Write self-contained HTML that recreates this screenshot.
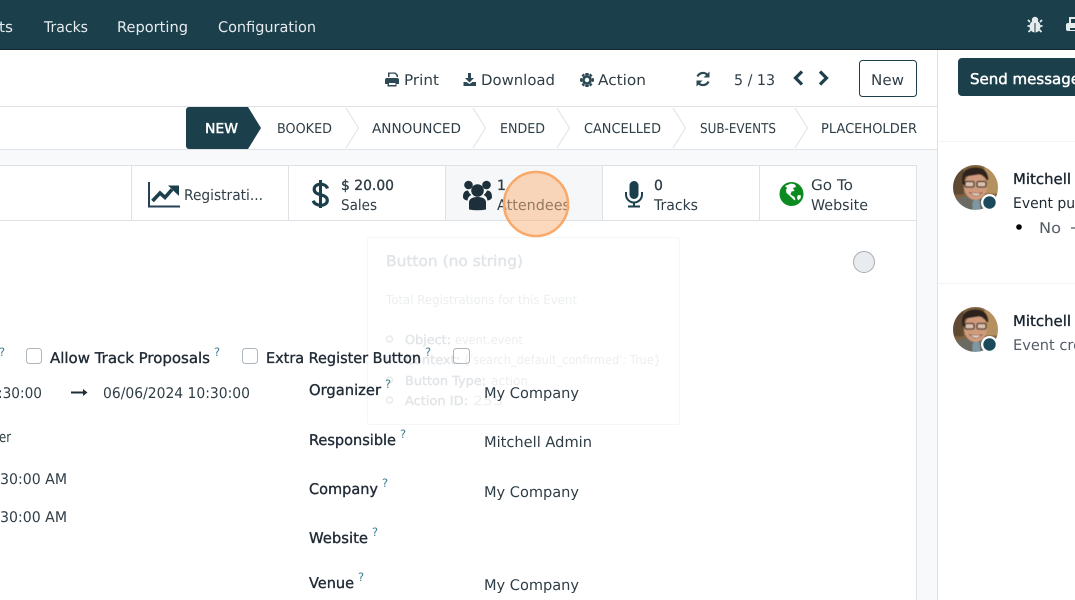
<!DOCTYPE html>
<html lang="en"><head><meta charset="utf-8"><title>Event</title>
<style>
html,body{margin:0;padding:0;background:#fff;width:1075px;height:600px;overflow:hidden}
svg{display:block}
text{font-family:"DejaVu Sans",sans-serif;font-size:14.700px;fill:#374151;text-rendering:geometricPrecision}
.n{fill:#e6ecee}
.t{fill:#2f3e46}
.s{font-size:13.600px;fill:#2f3e46}
.l{fill:#212b36;font-size:14.700px;stroke:#212b36;stroke-width:.35px}
.m{stroke:#2f3e46;stroke-width:.35px;font-size:14px}
.q{font-size:11.500px;fill:#3f7f93}
</style></head><body>
<svg width="1075" height="600" viewBox="0 0 1075 600" xmlns="http://www.w3.org/2000/svg">
<defs><filter id="soft" x="-10%" y="-10%" width="120%" height="120%"><feGaussianBlur stdDeviation=".45"/></filter></defs>
<!-- backgrounds -->
<rect width="1075" height="600" fill="#fff"/>
<rect y="150" width="938" height="450" fill="#f8f9fa"/>
<rect y="107" width="937" height="43" fill="#fff"/>
<rect y="166" width="916" height="434" fill="#fff"/>
<rect y="0" width="1075" height="49" fill="#1b3f4b"/>
<rect y="49" width="1075" height="1" fill="#12262e"/>
<!-- nav -->
<text class="n" x="-1" y="32" textLength="14" lengthAdjust="spacingAndGlyphs">ts</text>
<text class="n" x="44" y="32" textLength="44" lengthAdjust="spacingAndGlyphs">Tracks</text>
<text class="n" x="117" y="32" textLength="71" lengthAdjust="spacingAndGlyphs">Reporting</text>
<text class="n" x="218" y="32" textLength="98" lengthAdjust="spacingAndGlyphs">Configuration</text>
<!-- bug -->
<g fill="#e6ecee" stroke="#e6ecee">
<ellipse cx="1035" cy="26.500" rx="5.500" ry="6" stroke="none"/>
<circle cx="1035" cy="20" r="3.200" stroke="none"/>
<path d="M1030 22l-2-2M1040 22l2-2M1030 26h-2.500M1040 26h2.500M1030.500 30l-2 2M1039.500 30l2 2" fill="none" stroke-width="1.800"/>
</g>
<path d="M1035 23v9.500" stroke="#1b3f4b" stroke-width="1"/>
<!-- top print -->
<g fill="#e6ecee"><rect x="1069" y="17" width="10" height="7"/><rect x="1066" y="23" width="12" height="8" rx="2"/></g>
<rect x="1071" y="19" width="6" height="4" fill="#1b3f4b"/>
<rect x="1070" y="28" width="8" height="2" fill="#1b3f4b"/>
<!-- control panel -->
<rect x="0" y="106" width="937" height="1" fill="#dee2e6"/>
<rect x="0" y="149" width="937" height="1" fill="#dee2e6"/>
<rect x="937" y="50" width="1" height="550" fill="#dee2e6"/>
<!-- print icon -->
<g fill="#2c4a55">
<path d="M388 77v-4.500h7.500l2.500 2.500v2h-1.500v-1.500l-1.800-1.800h-5.200v3.300z"/>
<path d="M385 80a2 2 0 0 1 2-2h10a2 2 0 0 1 2 2v4h-2.500v2.500h-9v-2.500h-2.500zM389 83v2h6.500v-2z" fill-rule="evenodd"/>
</g>
<text class="t" x="404" y="85" textLength="35" lengthAdjust="spacingAndGlyphs">Print</text>
<!-- download icon -->
<path d="M468 73h3v5h3l-4.500 4.500-4.500-4.500h3zM463.500 82h3l3 2 3-2h3.500v4h-12.500z" fill="#2c4a55"/>
<text class="t" x="481" y="85" textLength="74" lengthAdjust="spacingAndGlyphs">Download</text>
<!-- gear -->
<g fill="#2c4a55"><circle cx="587" cy="80" r="5"/><path d="M585.500 73h3l.5 2h-4zM585.500 87h3l.5-2h-4zM580 78.500v3l2 .5v-4zM594 78.500v3l-2 .5v-4zM581.500 75.500l2-2 1.500 1.500-2 2zM592.500 75.500l-2-2-1.500 1.500 2 2zM581.500 84.500l2 2 1.500-1.500-2-2zM592.500 84.500l-2 2-1.500-1.500 2-2z"/></g>
<circle cx="587" cy="80" r="2.200" fill="#fff"/>
<text class="t" x="598" y="85" textLength="48" lengthAdjust="spacingAndGlyphs">Action</text>
<!-- refresh -->
<path d="M697.500 76.500a6 6 0 0 1 10-1.500M708.500 81.500a6 6 0 0 1-10 1.500" fill="none" stroke="#2c4a55" stroke-width="2.200"/>
<path d="M709.500 71.500v6h-6zM696.500 86.500v-6h6z" fill="#2c4a55"/>
<text x="734" y="85" textLength="41" lengthAdjust="spacingAndGlyphs" class="t">5 / 13</text>
<path d="M802 71.500l-6.500 6.500 6.500 6.500" fill="none" stroke="#1f3f4b" stroke-width="3.200"/>
<path d="M820 71.500l6.500 6.500-6.500 6.500" fill="none" stroke="#1f3f4b" stroke-width="3.200"/>
<rect x="859.500" y="60.500" width="57" height="36" rx="3" fill="#fff" stroke="#1b3f4b"/>
<text class="t" x="871" y="85" textLength="33" lengthAdjust="spacingAndGlyphs">New</text>
<!-- send message -->
<rect x="958" y="58" width="130" height="38" rx="4" fill="#1b3f4b"/>
<text x="970" y="84" textLength="110" lengthAdjust="spacingAndGlyphs" style="fill:#fff;stroke:#fff;stroke-width:.45px;font-size:14.700px">Send message</text>
<!-- statusbar -->
<path d="M189 107h59l13 21-13 21h-59a3 3 0 0 1-3-3v-36a3 3 0 0 1 3-3z" fill="#1b3f4b"/>
<text x="205" y="133" textLength="33" lengthAdjust="spacingAndGlyphs" style="fill:#fff;stroke:#fff;stroke-width:.45px;font-size:13.600px">NEW</text>
<g fill="none" stroke="#dee2e6" stroke-width="1">
<path d="M346 108l12.500 20-12.500 20M473 108l12.500 20-12.500 20M557 108l12.500 20-12.500 20M673 108l12.500 20-12.500 20M795 108l12.500 20-12.500 20"/>
</g>
<text class="s" x="277" y="133" textLength="55" lengthAdjust="spacingAndGlyphs">BOOKED</text>
<text class="s" x="372" y="133" textLength="89" lengthAdjust="spacingAndGlyphs">ANNOUNCED</text>
<text class="s" x="500" y="133" textLength="45" lengthAdjust="spacingAndGlyphs">ENDED</text>
<text class="s" x="584" y="133" textLength="77" lengthAdjust="spacingAndGlyphs">CANCELLED</text>
<text class="s" x="700" y="133" textLength="76" lengthAdjust="spacingAndGlyphs">SUB-EVENTS</text>
<text class="s" x="821" y="133" textLength="96" lengthAdjust="spacingAndGlyphs">PLACEHOLDER</text>
<!-- form sheet borders -->
<rect x="0" y="165" width="917" height="1" fill="#dee2e6"/>
<rect x="916" y="165" width="1" height="435" fill="#dee2e6"/>
<rect x="446" y="166" width="156" height="54" fill="#f6f7f8"/>
<rect x="0" y="220" width="916" height="1" fill="#dee2e6"/>
<g fill="#dee2e6"><rect x="131" y="166" width="1" height="54"/><rect x="288" y="166" width="1" height="54"/><rect x="445" y="166" width="1" height="54"/><rect x="602" y="166" width="1" height="54"/><rect x="759" y="166" width="1" height="54"/></g>
<!-- registrations icon -->
<path d="M149 182v24.500h31" fill="none" stroke="#24405a" stroke-width="2"/>
<path d="M152.500 201l7.500-8 5 4.500 7-8" fill="none" stroke="#1b3f4b" stroke-width="3.600"/>
<path d="M168 185.500h11v10.500z" fill="#1b3f4b"/>
<text x="184" y="200" textLength="79" lengthAdjust="spacingAndGlyphs" class="t">Registrati...</text>
<!-- dollar -->
<path d="M327.500 188.500c-1-3-4-4.300-7-4.300s-6.300 1.600-6.300 5c0 3.500 3 4.500 6.300 5.500s6.800 2 6.800 5.500-3.300 5-6.800 5-6.300-1.600-7.300-4.500" fill="none" stroke="#1b3f4b" stroke-width="3.200"/>
<path d="M320.500 180v28" stroke="#1b3f4b" stroke-width="3"/>
<text x="341" y="190" textLength="53" lengthAdjust="spacingAndGlyphs" class="t m">$ 20.00</text>
<text x="341" y="210" textLength="36" lengthAdjust="spacingAndGlyphs" class="t">Sales</text>
<!-- users -->
<g fill="#1d2f3a">
<circle cx="477.500" cy="190.500" r="6.300"/><circle cx="468.500" cy="185" r="4.300"/><circle cx="486.500" cy="185" r="4.300"/>
<path d="M469 209.500v-7c0-3.500 3-5.500 8.500-5.500s8.500 2 8.500 5.500v7q-8.500 1.500-17 0z"/>
<path d="M463 197c0-4 1.500-6.500 5-6.500 .8 2 2 3.500 3.500 4.500-2.500 1-3.700 3-3.900 5.500-2.500-.2-4.500-1.500-4.600-3.500zM492 197c0-4-1.500-6.500-5-6.500-.8 2-2 3.500-3.500 4.500 2.500 1 3.700 3 3.900 5.500 2.500-.2 4.500-1.500 4.600-3.500z"/>
</g>
<text x="497" y="190" class="t m">1</text>
<text x="497" y="210" textLength="73" lengthAdjust="spacingAndGlyphs" class="t">Attendees</text>
<!-- mic -->
<rect x="629.500" y="181" width="9" height="18" rx="4.500" fill="#1b3f4b"/>
<path d="M626 192v2.500a8 8 0 0 0 16 0V192M634 203v2.500M628 206.500h12" fill="none" stroke="#1b3f4b" stroke-width="2"/>
<text x="654" y="190" class="t m">0</text>
<text x="654" y="210" textLength="44" lengthAdjust="spacingAndGlyphs" class="t">Tracks</text>
<!-- globe -->
<circle cx="791.500" cy="194" r="12" fill="#0a8a1f"/>
<path d="M785 186l6-2.500 4 1 1 2.500-3 1 1.500 3-3 .5-1 3 4 2.500 1 3.500-2-1-4-4-3-2.500-.5-3 1-2zM798 195l3 .5-.5 3-2.500 2-1-3z" fill="#fff"/>
<text x="811" y="190" textLength="42" lengthAdjust="spacingAndGlyphs" class="t">Go To</text>
<text x="811" y="210" textLength="57" lengthAdjust="spacingAndGlyphs" class="t">Website</text>
<!-- radio -->
<circle cx="864" cy="262" r="10.500" fill="#e9ecef" stroke="#a8adb2" stroke-width="1"/>
<!-- faint tooltip -->
<rect x="367.500" y="237.500" width="312" height="187" rx="2" fill="#fff" stroke="#f5f6f7"/>
<g>
<text x="386" y="266" textLength="137" lengthAdjust="spacingAndGlyphs" style="fill:#e2e5e8;stroke:#e2e5e8;stroke-width:.5px">Button (no string)</text>
<text x="386" y="304" textLength="191" lengthAdjust="spacingAndGlyphs" style="fill:#eceef0;font-size:12.500px">Total Registrations for this Event</text>
<text x="405" y="344" textLength="46" lengthAdjust="spacingAndGlyphs" style="fill:#e2e5e8;stroke:#e2e5e8;stroke-width:.4px;font-size:12.500px">Object:</text>
<text x="455" y="344" textLength="68" lengthAdjust="spacingAndGlyphs" style="fill:#eceef0;font-size:12.500px">event.event</text>
<text x="405" y="364" textLength="55" lengthAdjust="spacingAndGlyphs" style="fill:#e2e5e8;stroke:#e2e5e8;stroke-width:.4px;font-size:12.500px">Context:</text>
<text x="463" y="364" textLength="198" lengthAdjust="spacingAndGlyphs" style="fill:#eceef0;font-size:12.500px">{'search_default_confirmed': True}</text>
<text x="405" y="385" textLength="81" lengthAdjust="spacingAndGlyphs" style="fill:#e2e5e8;stroke:#e2e5e8;stroke-width:.4px;font-size:12.500px">Button Type:</text>
<text x="491" y="385" textLength="37" lengthAdjust="spacingAndGlyphs" style="fill:#eceef0;font-size:12.500px">action</text>
<text x="405" y="405" textLength="63" lengthAdjust="spacingAndGlyphs" style="fill:#e2e5e8;stroke:#e2e5e8;stroke-width:.4px;font-size:12.500px">Action ID:</text>
<text x="473" y="405" textLength="30" lengthAdjust="spacingAndGlyphs" style="fill:#eceef0;font-size:12.500px">255</text>
</g>
<g fill="none" stroke="#e8eaec" stroke-width="1.500"><circle cx="389.500" cy="339" r="3"/><circle cx="389.500" cy="359" r="3"/><circle cx="389.500" cy="380" r="3"/><circle cx="389.500" cy="400" r="3"/></g>
<!-- checkbox row -->
<text class="q" x="-1" y="356">?</text>
<g fill="#fff" stroke="#adb5bd"><rect x="26.500" y="348.500" width="15" height="15" rx="3"/><rect x="242.500" y="348.500" width="15" height="15" rx="3"/><rect x="453.500" y="348.500" width="16" height="15" rx="3" fill="none"/></g>
<text class="l" x="50" y="363" textLength="160" lengthAdjust="spacingAndGlyphs">Allow Track Proposals</text>
<text class="q" x="214" y="356">?</text>
<text class="l" x="266" y="363" textLength="155" lengthAdjust="spacingAndGlyphs">Extra Register Button</text>
<text class="q" x="425" y="356">?</text>
<!-- dates -->
<text class="t" x="-2" y="398" textLength="44" lengthAdjust="spacingAndGlyphs">:30:00</text>
<path d="M71 392.500h13" stroke="#1f2d36" stroke-width="2"/><path d="M83 389l4.500 3.500-4.500 3.500z" fill="#1f2d36"/>
<text class="t" x="103" y="398" textLength="147" lengthAdjust="spacingAndGlyphs">06/06/2024 10:30:00</text>
<text class="t" x="-1" y="442" textLength="12" lengthAdjust="spacingAndGlyphs">er</text>
<text class="t" x="0" y="484" textLength="67" lengthAdjust="spacingAndGlyphs">30:00 AM</text>
<text class="t" x="0" y="522" textLength="67" lengthAdjust="spacingAndGlyphs">30:00 AM</text>
<!-- labels -->
<text class="l" x="309" y="395" textLength="72" lengthAdjust="spacingAndGlyphs">Organizer</text><text class="q" x="385" y="388">?</text>
<text class="l" x="309" y="445" textLength="87" lengthAdjust="spacingAndGlyphs">Responsible</text><text class="q" x="400" y="438">?</text>
<text class="l" x="309" y="494" textLength="69" lengthAdjust="spacingAndGlyphs">Company</text><text class="q" x="382" y="487">?</text>
<text class="l" x="309" y="543" textLength="59" lengthAdjust="spacingAndGlyphs">Website</text><text class="q" x="372" y="536">?</text>
<text class="l" x="309" y="588" textLength="45" lengthAdjust="spacingAndGlyphs">Venue</text><text class="q" x="358" y="581">?</text>
<text class="t" x="484" y="398" textLength="95" lengthAdjust="spacingAndGlyphs">My Company</text>
<text class="t" x="484" y="447" textLength="108" lengthAdjust="spacingAndGlyphs">Mitchell Admin</text>
<text class="t" x="484" y="497" textLength="95" lengthAdjust="spacingAndGlyphs">My Company</text>
<text class="t" x="484" y="590" textLength="95" lengthAdjust="spacingAndGlyphs">My Company</text>
<!-- chatter -->
<rect x="938" y="141" width="137" height="1" fill="#f3f4f5"/>
<rect x="938" y="283" width="137" height="1" fill="#f3f4f5"/>
<defs>
<clipPath id="av"><circle cx="0" cy="0" r="22.500"/></clipPath>
<g id="avatar"><g clip-path="url(#av)"><g filter="url(#soft)">
<rect x="-23" y="-23" width="46" height="46" fill="#7f6240"/>
<rect x="-23" y="-23" width="11" height="30" fill="#5f4a30"/>
<rect x="9" y="-22" width="14" height="28" fill="#b59160"/>
<path d="M-23 23v-9q8-5 14-5l9 3 10-3q8 1 13 6v8z" fill="#6b6a62"/>
<path d="M-3 23v-9l3-2 4 1 1 10z" fill="#7f97a3"/>
<ellipse cx="0" cy="-1" rx="11.500" ry="13.500" fill="#cf9b7c"/>
<path d="M-13 -3q-3-16 11-17 14-1 15 12l-2 1q-2-6-8-6-6 1-13 2-1 3-1 8z" fill="#2d211a"/>
<rect x="-10.500" y="-6" width="9" height="5.500" rx="1.500" fill="#dcc0ac" stroke="#2a2422" stroke-width="1.300"/>
<rect x="1.500" y="-6" width="9" height="5.500" rx="1.500" fill="#dcc0ac" stroke="#2a2422" stroke-width="1.300"/>
<path d="M-6 5q6 6 13 0q-6 2-13 0z" fill="#fff" stroke="#8d5a45" stroke-width=".8"/>
</g></g>
<circle cx="14" cy="15" r="8.500" fill="#fff"/><circle cx="14" cy="15" r="6.200" fill="#1b4a5a"/></g>
</defs>
<use href="#avatar" transform="translate(975.500 187.500)"/>
<use href="#avatar" transform="translate(975.500 329.500)"/>
<text class="l" x="1013" y="184" style="fill:#1a2530;stroke:#1a2530" textLength="58" lengthAdjust="spacingAndGlyphs">Mitchell</text>
<text x="1013" y="208" style="fill:#1f2933" textLength="71" lengthAdjust="spacingAndGlyphs">Event pub</text>
<circle cx="1019" cy="227" r="2.800" fill="#000"/>
<text x="1039" y="233" textLength="22" lengthAdjust="spacingAndGlyphs" style="fill:#555c66">No</text>
<path d="M1071 228h4" stroke="#6a7078" stroke-width="1.500"/>
<text class="l" x="1013" y="326" style="fill:#1a2530;stroke:#1a2530" textLength="58" lengthAdjust="spacingAndGlyphs">Mitchell</text>
<text x="1013" y="350" style="fill:#555c66" textLength="78" lengthAdjust="spacingAndGlyphs">Event crea</text>
<!-- highlight -->
<circle cx="536" cy="204" r="32" fill="#f9b27a" fill-opacity=".5" stroke="#f8a868" stroke-width="2.500"/>
</svg>
</body></html>
